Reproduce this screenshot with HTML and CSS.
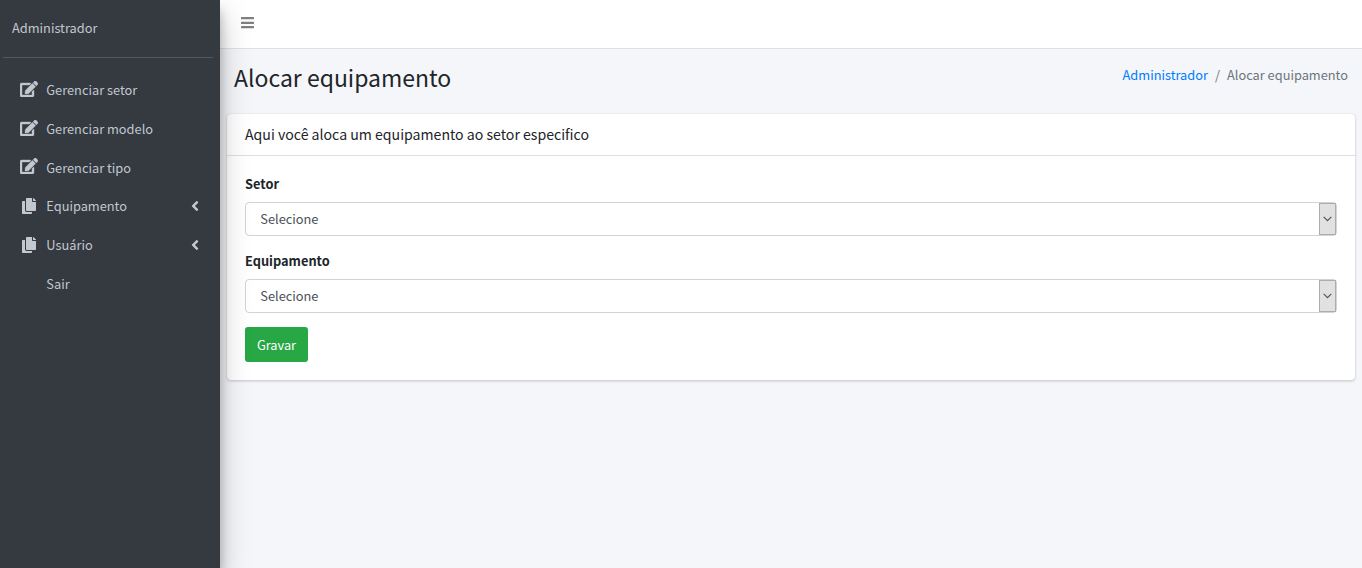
FILE: index.html
```html
<!DOCTYPE html>
<html lang="pt-br">
<head>
<meta charset="utf-8">
<title>Alocar equipamento</title>
<link rel="stylesheet" href="styles.css">
</head>
<body>
<svg class="sprite" width="0" height="0">
  <symbol id="edit" viewBox="0 0 576 512"><path d="M402.6 83.2l90.2 90.2c3.8 3.8 3.8 10 0 13.8L274.4 405.6l-92.8 10.3c-12.4 1.4-22.9-9.1-21.5-21.5l10.3-92.8L388.8 83.2c3.8-3.8 10-3.8 13.8 0zm162-22.9l-48.8-48.8c-15.2-15.2-39.9-15.2-55.2 0l-35.4 35.4c-3.8 3.8-3.8 10 0 13.8l90.2 90.2c3.8 3.8 10 3.8 13.8 0l35.4-35.4c15.2-15.3 15.2-40 0-55.2zM384 346.2V448H64V128h229.8c3.2 0 6.2-1.3 8.5-3.5l40-40c7.6-7.6 2.2-20.5-8.5-20.5H48C21.5 64 0 85.5 0 112v352c0 26.5 21.5 48 48 48h352c26.5 0 48-21.5 48-48V306.2c0-10.7-12.9-16-20.5-8.5l-40 40c-2.2 2.3-3.5 5.3-3.5 8.5z"/></symbol>
  <symbol id="copy" viewBox="0 0 448 512"><path d="M320 448v40c0 13.255-10.745 24-24 24H24c-13.255 0-24-10.745-24-24V120c0-13.255 10.745-24 24-24h72v296c0 30.879 25.121 56 56 56h168zm0-344V0H152c-13.255 0-24 10.745-24 24v368c0 13.255 10.745 24 24 24h272c13.255 0 24-10.745 24-24V128H344c-13.2 0-24-10.8-24-24zm120.971-31.029L375.029 7.029A24 24 0 0 0 358.059 0H352v96h96v-6.059a24 24 0 0 0-7.029-16.97z"/></symbol>
  <symbol id="angle" viewBox="0 0 256 512"><path d="M31.7 239l136-136c9.4-9.4 24.6-9.4 33.9 0l22.6 22.6c9.4 9.4 9.4 24.6 0 33.9L127.9 256l96.4 96.4c9.4 9.4 9.4 24.6 0 33.9L201.7 409c-9.4 9.4-24.6 9.4-33.9 0l-136-136c-9.5-9.4-9.5-24.6-.1-34z"/></symbol>
</svg>
<div class="wrapper">
  <aside class="sidebar">
    <div class="user">Administrador</div>
    <nav class="menu">
      <a class="item"><svg class="icon edit"><use href="#edit"/></svg><span class="label">Gerenciar setor</span></a>
      <a class="item"><svg class="icon edit"><use href="#edit"/></svg><span class="label">Gerenciar modelo</span></a>
      <a class="item"><svg class="icon edit"><use href="#edit"/></svg><span class="label">Gerenciar tipo</span></a>
      <a class="item"><svg class="icon"><use href="#copy"/></svg><span class="label">Equipamento</span><svg class="angle"><use href="#angle"/></svg></a>
      <a class="item"><svg class="icon"><use href="#copy"/></svg><span class="label">Usuário</span><svg class="angle"><use href="#angle"/></svg></a>
      <a class="item"><span class="icon"></span><span class="label">Sair</span></a>
    </nav>
  </aside>
  <main class="main">
    <header class="topbar">
      <svg class="bars" viewBox="0 0 13 12"><path d="M.5 0h12a.5.5 0 0 1 .5.5v1.3a.5.5 0 0 1-.5.5H.5a.5.5 0 0 1-.5-.5V.5A.5.5 0 0 1 .5 0zM.5 4.7h12a.5.5 0 0 1 .5.5v1.3a.5.5 0 0 1-.5.5H.5a.5.5 0 0 1-.5-.5V5.2a.5.5 0 0 1 .5-.5zM.5 9h12a.5.5 0 0 1 .5.5v1.3a.5.5 0 0 1-.5.5H.5a.5.5 0 0 1-.5-.5V9.5A.5.5 0 0 1 .5 9z"/></svg>
    </header>
    <div class="heading">
      <h1 class="title">Alocar equipamento</h1>
      <div class="crumbs"><a class="link">Administrador</a><span>/</span><span>Alocar equipamento</span></div>
    </div>
    <section class="card">
      <h2 class="card-header">Aqui você aloca um equipamento ao setor especifico</h2>
      <form class="card-body">
        <label class="field-label">Setor</label>
        <div class="select"><span class="value">Selecione</span><span class="drop"><svg class="chevron" viewBox="0 0 9 6"><path d="M.7.8l3.8 3.8L8.3.8"/></svg></span></div>
        <label class="field-label">Equipamento</label>
        <div class="select"><span class="value">Selecione</span><span class="drop"><svg class="chevron" viewBox="0 0 9 6"><path d="M.7.8l3.8 3.8L8.3.8"/></svg></span></div>
        <button class="save" type="button">Gravar</button>
      </form>
    </section>
  </main>
</div>
</body>
</html>
```

FILE: styles.css
```css
* { box-sizing: border-box; }
body {
  margin: 0;
  font-family: "Noto Sans CJK SC", "Noto Sans", sans-serif;
  font-size: 12.8px;
  line-height: 21px;
  color: #212529;
  background: #f4f6f9;
}
.sprite { position: absolute; }
.wrapper { display: flex; height: 568px; overflow: hidden; }
.sidebar {
  width: 220px;
  flex: none;
  z-index: 1;
  background: #343a40;
  color: #c2c7d0;
  box-shadow: 0 14px 28px rgba(0,0,0,.25), 0 10px 10px rgba(0,0,0,.22);
}
.user {
  height: 58px;
  margin: 0 7px 0 3px;
  padding: 17px 9px 0;
  border-bottom: 1px solid #4f5962;
}
.menu { padding: 12.2px 7px 0; }
.item { display: flex; align-items: center; height: 38.75px; padding: 0 14px 0 13px; }
.icon { width: 18px; height: 16px; margin-right: 8.3px; flex: none; fill: currentColor; }
.edit { margin-bottom: 1.6px; stroke: currentColor; stroke-width: 12px; overflow: visible; }
.label { flex: 1; }
.angle { width: 8px; height: 16px; fill: currentColor; }
.main { flex: 1; min-width: 0; }
.topbar { height: 49px; padding: 17px 21px; background: #fff; border-bottom: 1px solid #dee2e6; }
.bars { display: block; width: 13px; height: 12px; fill: #808080; }
.heading { display: flex; justify-content: space-between; height: 65px; padding: 14px 14px 0; }
.title { margin: 0; font-size: 22.99px; font-weight: 400; line-height: 28px; }
.crumbs { display: flex; gap: 7px; padding-top: 1px; color: #6c757d; }
.link { color: #007bff; }
.card {
  height: 266px;
  margin: 0 7px;
  background: #fff;
  border-radius: 4px;
  box-shadow: 0 0 1px rgba(0,0,0,.125), 0 1px 3px rgba(0,0,0,.2);
}
.card-header {
  height: 42px;
  margin: 0;
  padding: 10px 18px;
  font-size: 14.12px;
  font-weight: 400;
  line-height: 21px;
  border-bottom: 1px solid #dfdfdf;
}
.card-body { display: flex; flex-direction: column; align-items: flex-start; padding: 17px 18px; }
.field-label { height: 29px; font-weight: 700; }
.select {
  display: flex;
  align-items: center;
  width: 1092px;
  height: 34px;
  margin-bottom: 14px;
  padding-left: 14.3px;
  border: 1px solid #ced4da;
  border-radius: 4px;
  color: #495057;
}
.value { flex: 1; height: 23px; }
.drop {
  display: flex;
  align-items: center;
  justify-content: center;
  width: 17px;
  height: 32px;
  padding-right: 1px;
  background: #e1e1e1;
  border: 1px solid #adadad;
}
.chevron { width: 9px; height: 6px; fill: none; stroke: #555; stroke-width: 1.2; }
.save {
  width: 63px;
  height: 35px;
  padding: 0;
  font: inherit;
  color: #fff;
  background: #28a745;
  border: 0;
  border-radius: 3px;
}
```
